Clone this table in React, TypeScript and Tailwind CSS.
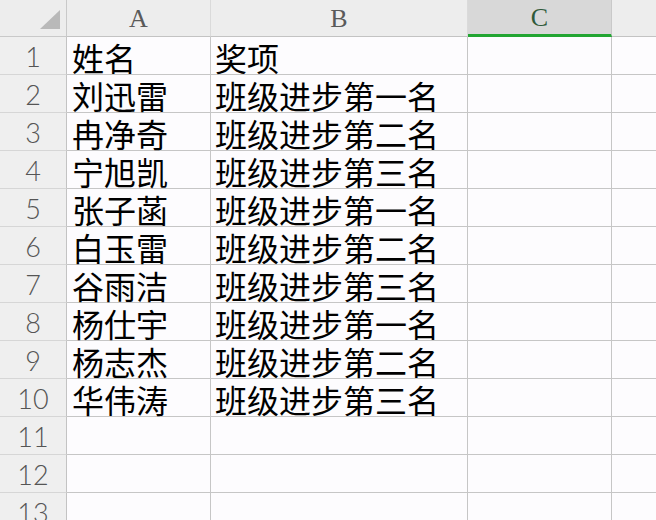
import React from "react";

const rows: [string, string][] = [
  ["姓名", "奖项"],
  ["刘迅雷", "班级进步第一名"],
  ["冉净奇", "班级进步第二名"],
  ["宁旭凯", "班级进步第三名"],
  ["张子菡", "班级进步第一名"],
  ["白玉雷", "班级进步第二名"],
  ["谷雨洁", "班级进步第三名"],
  ["杨仕宇", "班级进步第一名"],
  ["杨志杰", "班级进步第二名"],
  ["华伟涛", "班级进步第三名"],
  ["", ""],
  ["", ""],
  ["", ""],
];

const cjk = "font-['Noto_Sans_CJK_SC',sans-serif]";

export default function App() {
  return (
    <div className="w-[656px] h-[520px] overflow-hidden bg-[#fdfcfe]">
      <div className="grid grid-cols-[67px_144px_257px_144px_1fr] grid-rows-[37px] auto-rows-[38px]">
        {/* corner */}
        <div className="relative bg-[#ededed] border-r border-b border-[#c9c9c9]">
          <svg className="absolute left-0 top-0" width="67" height="37">
            <polygon points="60,10 60,29 40,29" fill="#b9b9b9" />
          </svg>
        </div>
        {/* column headers */}
        <div className="flex items-center justify-center bg-[#ededed] border-r border-[#dadada] border-b border-b-[#c3c3c3] font-['Liberation_Serif',serif] text-[26px] font-light text-[#5a5a5a]">
          A
        </div>
        <div className="flex items-center justify-center bg-[#ededed] border-r border-[#dadada] border-b border-b-[#c3c3c3] font-['Liberation_Serif',serif] text-[26px] font-light text-[#5a5a5a]">
          B
        </div>
        <div className="flex items-center justify-center bg-[#d8d8d8] border-r border-[#c9c9c9] border-b-[3px] border-b-[#22a532] font-['Liberation_Serif',serif] text-[26px] text-[#2f5a3a]">
          C
        </div>
        <div className="bg-[#ededed] border-b border-[#c3c3c3]" />

        {rows.map(([name, award], i) => (
          <React.Fragment key={i}>
            <div className="flex items-center justify-center bg-[#efefef] border-r border-[#c3c3c3] border-b border-b-[#d6d6d6] font-['Lato',sans-serif] font-light text-[27px] text-[#555] pt-1">
              {i + 1}
            </div>
            <div className={`flex items-center pl-[5px] pt-[2px] border-r border-b border-[#c6c6c6] text-[32px] leading-none text-black ${cjk}`}>
              {name}
            </div>
            <div className={`flex items-center pl-[4px] pt-[2px] border-r border-b border-[#c6c6c6] text-[32px] leading-none text-black ${cjk}`}>
              {award}
            </div>
            <div className="border-r border-b border-[#c6c6c6]" />
            <div className="border-b border-[#c6c6c6]" />
          </React.Fragment>
        ))}
      </div>
    </div>
  );
}
